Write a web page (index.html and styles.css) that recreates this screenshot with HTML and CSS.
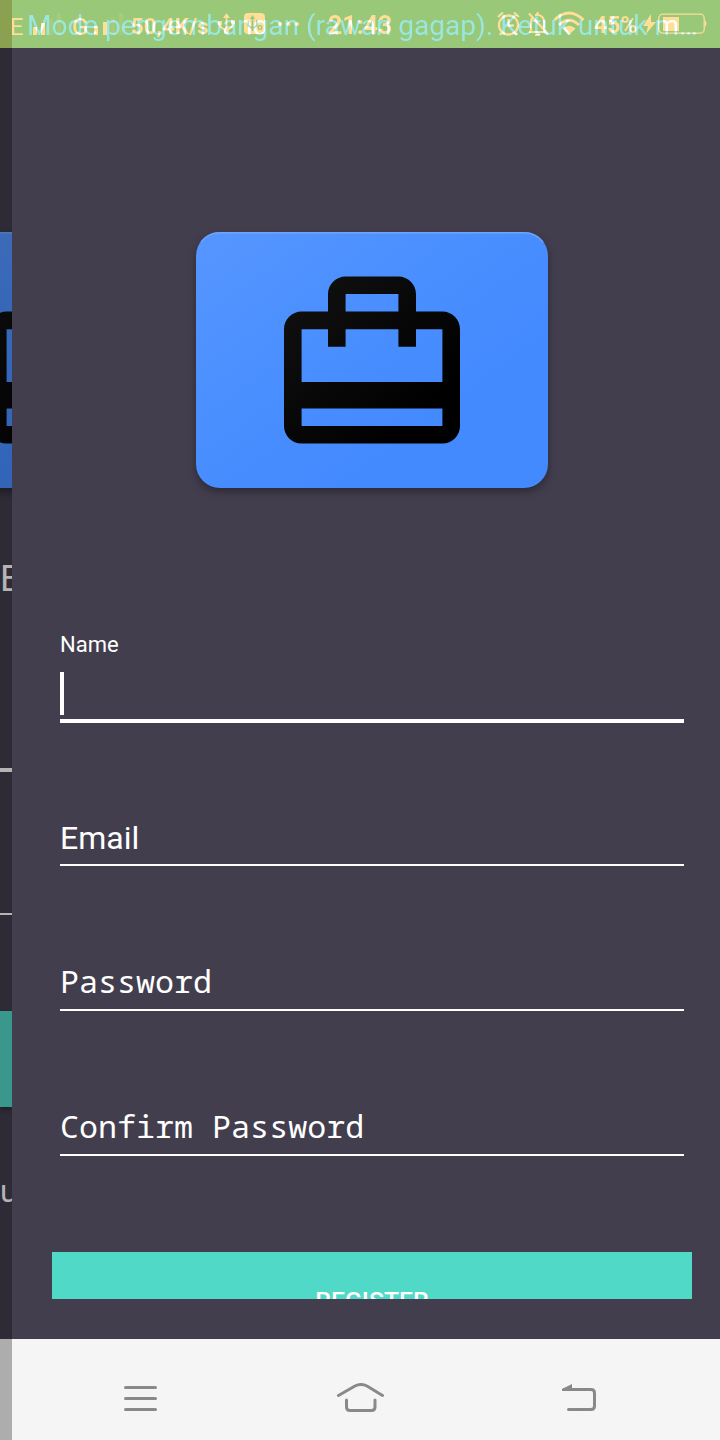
FILE: index.html
```html
<!DOCTYPE html>
<html lang="id">
<head>
<meta charset="utf-8">
<meta name="viewport" content="width=720">
<title>Register</title>
<link rel="stylesheet" href="styles.css">
</head>
<body>
<svg class="defs" width="0" height="0">
  <defs>
    <linearGradient id="blue" x1="0" y1="0" x2="1" y2="1">
      <stop offset="0" stop-color="#5796ff"/><stop offset=".28" stop-color="#4d91ff"/><stop offset=".7" stop-color="#448aff"/><stop offset="1" stop-color="#448aff"/>
    </linearGradient>
    <linearGradient id="ink" x1="0" y1="0" x2="1" y2="1">
      <stop offset="0" stop-color="#121212"/><stop offset=".8" stop-color="#000"/>
    </linearGradient>
    <symbol id="travel-card" viewBox="0 0 352 256">
      <rect width="352" height="256" rx="24" fill="url(#blue)"/>
      <path d="M5 10Q12 .7 24 .7H328Q340 .7 347 10" fill="none" stroke="#6fa5fb" stroke-width="1.4"/>
      <path fill="url(#ink)" transform="translate(70.4 26.8) scale(8.8)" d="M20 6h-3V4c0-1.11-.89-2-2-2H9c-1.11 0-2 .89-2 2v2H4c-1.11 0-2 .89-2 2v11c0 1.11.89 2 2 2h16c1.11 0 2-.89 2-2V8c0-1.11-.89-2-2-2zM9 4h6v2H9V4zm11 15H4v-2h16v2zm0-5H4V8h3v2h2V8h6v2h2V8h3v6z"/>
    </symbol>
  </defs>
</svg>
<div class="phone">
  <header class="status">
    <div class="system">
      <span class="net-e">E</span>
      <svg class="bars-one" width="30" height="24"><path d="M0 14h4v8H0zM8 10h4v12H8z"/><path opacity=".15" d="M16 6h4v16h-4zM24 0h4v22h-4z"/></svg>
      <span class="net-g">G</span>
      <svg class="bars-two" width="30" height="24"><path d="M0 13h4v9H0zM9 9h4v13H9z"/><path opacity=".15" d="M17 5h4v17h-4zM25 0h4v22h-4z"/></svg>
      <span class="speed">50,4K/s</span>
      <svg class="usb" width="17" height="23" fill="none" stroke-width="1.800"><path d="M8.500 3V19M2 10V12Q2 15 8.500 17Q15 15 15 10"/><path class="solid" d="M8.500 0L12 5H5zM0 8h4v4H0zM13 7h4v4h-4z"/><circle class="solid" cx="8.500" cy="18.500" r="2.500"/></svg>
      <svg class="app" width="21" height="22"><path fill-rule="evenodd" d="M4 0H17Q21 0 21 4V17Q21 21 17 21H4Q0 21 0 17V4Q0 0 4 0ZM8.500 2L6 6H7.700V14L5 12V8H3.500V13L7.700 16V18H9.300V6H11ZM12 7V12L9.300 14V16L13.500 13V7ZM16 12A2.500 2.500 0 1 0 16 17A2.500 2.500 0 1 0 16 12ZM16 13.300A1.200 1.200 0 1 1 16 15.700A1.200 1.200 0 1 1 16 13.300Z"/></svg>
      <svg class="dots" width="22" height="6"><circle cx="2" cy="3" r="2"/><circle cx="10.500" cy="3" r="2"/><circle cx="19" cy="3" r="2"/></svg>
      <span class="clock">21:43</span>
      <svg class="alarm" width="24" height="26" fill="none" stroke-width="2.300"><circle cx="11.500" cy="14" r="9.500"/><path d="M1 6L6 1.500M17 1.500L22 6M11.500 8V14.500H17M5 21L3 24M18 21L20 24"/></svg>
      <svg class="bell" width="23" height="26" fill="none" stroke-width="2.200"><path d="M2 20H19M4 19V10Q4 7 6 5M8 3Q17 2 17 11V16M2 1.500L21 22M10.500 0V3M8 23H13"/></svg>
      <svg class="wifi" width="34" height="25" fill="none" stroke-width="3"><path d="M1.500 9Q16 -5 30.500 9M6 14Q16 4.500 26 14"/><path class="solid" d="M9.500 17.500Q16 12 22.500 17.500L16 24Z"/></svg>
      <span class="level">45%</span>
      <svg class="bolt" width="13" height="22"><path d="M8 1L0 13H5L3 21L13 9H8Z"/></svg>
      <svg class="battery" width="50" height="22" fill="none" stroke-width="1.300"><rect x=".8" y="1.200" width="45.400" height="19" rx="4"/><path class="solid" d="M5 4H21V18H5zM47 7q3 4 0 7z"/></svg>
    </div>
    <div class="notice">Mode pengembangan (rawan gagap). Ketuk untuk m…</div>
  </header>
  <aside class="previous">
    <svg class="prev-card"><use href="#travel-card"/></svg>
    <div class="prev-letter">E</div>
    <div class="prev-line thick"></div>
    <div class="prev-line"></div>
    <div class="prev-button"></div>
    <div class="prev-link">u</div>
  </aside>
  <main class="register">
    <svg class="card"><use href="#travel-card"/></svg>
    <div class="field name"><label>Name</label><i class="caret"></i></div>
    <div class="field">Email</div>
    <div class="field mono">Password</div>
    <div class="field mono">Confirm Password</div>
    <div class="button">REGISTER</div>
  </main>
  <nav class="nav">
    <svg width="34" height="30" viewBox="0 0 34 30"><path d="M1.500 4.500H31.500M1.500 15.500H31.500M1.500 26.500H31.500"/></svg>
    <svg width="48" height="30" viewBox="0 0 48 30"><path d="M1.500 12.500L18 3Q24 0 30 3L45.500 12.500M9.500 17V24Q9.500 27.500 13 27.500H34.500Q38 27.500 38 24V17"/></svg>
    <svg width="34" height="30" viewBox="0 0 34 30"><path d="M2 6.500H29Q32.500 6.500 32.500 10V23Q32.500 26.500 29 26.500H6.500"/><path class="head" d="M0 6L10 1V8H0Z"/></svg>
  </nav>
  <div class="edge"></div>
</div>
</body>
</html>
```
FILE: styles.css
```css
* { box-sizing: border-box; }
body { margin: 0; font-family: Roboto, "Noto Sans", sans-serif; }
.defs { position: absolute; }
.phone {
  position: relative;
  width: 720px;
  height: 1440px;
  overflow: hidden;
  display: grid;
  grid-template: 48px 1291px 101px / 12px 708px;
  background: #423e4e;
}
.status {
  grid-column: 1 / 3;
  position: relative;
  isolation: isolate;
  overflow: hidden;
  background: linear-gradient(90deg, #8aa152 12px, #98c878 12px);
}
/* both layers add their light to the bar */
.system, .notice { position: absolute; inset: 0; mix-blend-mode: plus-lighter; }
.system { display: flex; align-items: flex-start; color: #671720; font-weight: 700; line-height: 28px; }
.system > * { flex: none; white-space: nowrap; }
.system svg { fill: currentColor; stroke: none; overflow: visible; }
.system svg[fill="none"] { fill: none; stroke: currentColor; }
.system .solid { fill: currentColor; stroke: none; }
.net-e, .net-g { font-size: 24px; font-weight: 400; margin-top: 13px; }
.net-e { width: 23px; margin-left: 10px; }
.bars-one { margin-top: 13px; }
.net-g { width: 22px; margin-left: 9px; font-weight: 500; }
.bars-two { margin-top: 13px; }
.speed { width: 81px; margin: 12px 0 0 7px; font-size: 22.300px; }
.usb { margin: 13px 0 0 6px; }
.app { margin: 13px 0 0 9px; }
.dots { margin: 21px 0 0 13px; }
.clock { width: 66px; margin: 12px 0 0 28px; font-size: 25px; }
.alarm { margin: 11px 0 0 103px; }
.bell { margin: 12px 0 0 6px; }
.wifi { margin: 11px 0 0 3px; }
.level { width: 46px; margin: 12px 0 0 7px; font-size: 23px; }
.bolt { margin: 13px 0 0 3px; }
.battery { margin: 13px 0 0 2px; }
.notice { padding-left: 27px; color: #002068; font-size: 28px; line-height: 51px; white-space: nowrap; }

.previous { overflow: hidden; background: #2e2b37; position: relative; }
.prev-card { display: block; width: 352px; height: 256px; margin: 184px 0 0 -99px; filter: brightness(.72) drop-shadow(0 4px 4px #0006); }
.prev-letter { height: 50px; margin-top: 66px; font-size: 36px; line-height: 50px; color: #b4b4b4; }
.prev-line { height: 2px; background: #b4b4b4; margin-top: 141px; }
.prev-line.thick { height: 4px; margin-top: 164px; }
.prev-button { height: 96px; margin-top: 96px; background: #39978b; box-shadow: 0 3px 5px #0005; }
.prev-link { margin-top: 64px; color: #b4b4b4; font-size: 32px; line-height: 40px; }

.register { overflow: hidden; padding: 184px 28px 0 40px; color: #fff; }
.card { display: block; width: 352px; height: 256px; margin: 0 auto 0 144px; filter: drop-shadow(0 4px 4px #0005); }
.field {
  margin: 0 8px;
  height: 145px;
  display: flex;
  align-items: flex-end;
  padding-bottom: 6px;
  border-bottom: 2px solid #fff;
  font-size: 32px;
  line-height: 40px;
}
.field.name { height: 91px; margin-top: 144px; padding: 0; border-bottom-width: 4px; flex-direction: column; align-items: flex-start; }
.name label { font-size: 22px; line-height: 26px; }
.caret { width: 4px; height: 43px; margin-top: 14px; background: #fff; }
.name + .field { height: 143px; }
.field.mono { font-family: "Noto Sans Mono", "Droid Sans Mono", "DejaVu Sans Mono", monospace; font-size: 31.700px; padding-bottom: 8px; }
.button { height: 47px; margin-top: 96px; padding-top: 34px; overflow: hidden; background: #51d9c8; text-align: center; font-size: 24.800px; line-height: 30px; font-weight: 500; }

.nav { grid-column: 1 / 3; display: grid; grid-template-columns: 34px 48px 34px; column-gap: 179px; padding: 44px 0 0 124px; background: #f5f5f5; }
.nav svg { fill: none; stroke: #898989; stroke-width: 3; stroke-linecap: round; }
.nav .head { fill: #898989; stroke: none; }
.nav svg:last-child { margin-left: -2px; }
.edge { position: absolute; left: 0; bottom: 0; width: 12px; height: 101px; background: #adadad; }
```
